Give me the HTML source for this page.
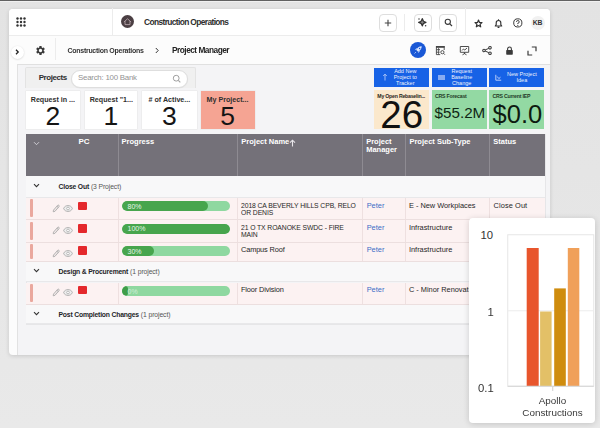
<!DOCTYPE html>
<html><head><meta charset="utf-8">
<style>
*{box-sizing:border-box;margin:0;padding:0}
html,body{width:600px;height:428px;overflow:hidden}
body{background:linear-gradient(#e3e3e3 0,#e5e5e5 40%,#e9e9e9 100%);font-family:"Liberation Sans",sans-serif;position:relative;color:#2a2a2a}
.a{position:absolute}
.t{position:absolute;white-space:nowrap;line-height:1}
#topstrip{left:0;top:0;width:600px;height:2.4px;background:linear-gradient(#5a5a5a 0,#6a6a6a 55%,#f0f0f0 60%,#f0f0f0 100%)}
#win{left:8.6px;top:8.6px;width:541.4px;height:346.6px;background:#fcfcfc;border-radius:4px;box-shadow:0 1px 4px rgba(0,0,0,.14)}
#hdr{left:8.6px;top:8.6px;width:541.4px;height:27.4px;border-bottom:1px solid #ececec;border-radius:4px 4px 0 0;background:#fff}
.vd{position:absolute;width:1px;background:#ececec}
.btn{position:absolute;width:18px;height:18px;border:1px solid #dedede;border-radius:4px;background:#fff}
#panel{left:17px;top:63.6px;width:533px;height:291.6px;background:#f4f4f6;border-left:1px solid #e2e2e2;border-top:1px solid #e0e0e0;border-bottom-right-radius:4px}
.card{position:absolute;background:#fff;top:90.7px;height:38px;width:54px;box-shadow:0 0 0 0.5px #e6e6e6}
.card .lb{position:absolute;top:5.3px;left:-10px;right:-10px;text-align:center;font-size:8px;font-weight:700;color:#2f2f2f;white-space:nowrap;line-height:1}
.card .num{position:absolute;top:12px;left:0;width:100%;text-align:center;font-size:26.5px;color:#151515;line-height:1}
.bb{position:absolute;top:67.5px;height:19px;background:#1762e6;color:#fff;font-size:5.5px;line-height:6.2px;text-align:center}
.rc{position:absolute;top:89.5px;height:39.5px}
.rc .lb{position:absolute;left:4px;top:4px;font-size:6px;font-weight:700;color:#222;white-space:nowrap}
#thead{left:26px;top:134px;width:519px;height:42px;background:#747179}
.th{position:absolute;top:0;height:42px;border-left:1px solid #8e8b92;color:#fff;font-weight:700;font-size:7.5px;padding:4px 0 0 3px;line-height:8px}
.grow{position:absolute;left:26px;width:519px;background:#f3f3f5;border-bottom:1px solid #e6e6e8}
.row{position:absolute;left:26px;width:519px;background:#fdf4f3;border-bottom:1px solid #ece2e1}
.cd{position:absolute;top:0;bottom:0;width:1px;background:#efe3e2}
.acc{position:absolute;left:4.3px;width:2.8px;background:#eaa89e;border-radius:1px}
.sq{position:absolute;left:52.3px;width:8.8px;height:8.8px;background:#e4282c;border-radius:1px}
.pb{position:absolute;left:95.5px;width:108.5px;height:10px;border-radius:5px;background:#8fd8a0;overflow:hidden}
.pf{position:absolute;left:0;top:0;height:10px;border-radius:5px;background:#47a54d}
.pt{position:absolute;left:6px;top:1.6px;font-size:7px;color:#e6f5e8;line-height:7px}
.cell{position:absolute;font-size:7.4px;color:#262626;line-height:7.2px;white-space:nowrap}
.blue{color:#3b6dc6}
#chart{left:469px;top:217.5px;width:126px;height:205.5px;background:#fff;border-radius:4px;box-shadow:0 1px 6px rgba(0,0,0,.16)}
</style></head><body><div id="root" style="position:absolute;left:0;top:0;width:600px;height:428px;overflow:hidden;filter:blur(0.3px)">
<div id="topstrip" class="a"></div>
<div id="win" class="a"></div>
<div id="hdr" class="a"></div>

<!-- header -->
<svg class="a" style="left:16.2px;top:17.3px" width="10" height="10" viewBox="0 0 10 10" fill="#333"><circle cx="1.5" cy="1.5" r="1.2"/><circle cx="5.0" cy="1.5" r="1.2"/><circle cx="8.5" cy="1.5" r="1.2"/><circle cx="1.5" cy="5.0" r="1.2"/><circle cx="5.0" cy="5.0" r="1.2"/><circle cx="8.5" cy="5.0" r="1.2"/><circle cx="1.5" cy="8.5" r="1.2"/><circle cx="5.0" cy="8.5" r="1.2"/><circle cx="8.5" cy="8.5" r="1.2"/></svg>
<div class="vd" style="left:112px;top:8px;height:28px"></div>
<svg class="a" style="left:121px;top:15px" width="13" height="13" viewBox="0 0 13 13">
<circle cx="6.5" cy="6.5" r="6.5" fill="#4b3f43"/>
<path d="M2.9 7 L6.5 3.8 L10.1 7 M4 6.1 V9.6 H9 V6.1" fill="none" stroke="#b9a8ad" stroke-width="0.85"/>
</svg>
<div class="t" style="left:144px;top:17.5px;font-size:8.4px;font-weight:700;color:#2e2e2e;letter-spacing:-0.62px">Construction Operations</div>
<div class="btn" style="left:379px;top:13.5px"></div>
<svg class="a" style="left:384px;top:18.5px" width="8" height="8" viewBox="0 0 8 8"><path d="M4 0.8V7.2M0.8 4H7.2" stroke="#444" stroke-width="1.1"/></svg>
<div class="vd" style="left:404px;top:14px;height:17px"></div>
<div class="btn" style="left:413.5px;top:13.5px"></div>
<svg class="a" style="left:417px;top:17px" width="11" height="11" viewBox="0 0 11 11"><path d="M5.3 1.6 Q5.8 4.8 9 5.3 Q5.8 5.8 5.3 9 Q4.8 5.8 1.6 5.3 Q4.8 4.8 5.3 1.6 Z" fill="#888" stroke="#333" stroke-width="1.2" stroke-linejoin="round"/><circle cx="2" cy="1.9" r="0.75" fill="#3a3a3a"/><circle cx="8.6" cy="8.7" r="0.75" fill="#3a3a3a"/></svg>
<div class="btn" style="left:439px;top:13.5px"></div>
<svg class="a" style="left:443.5px;top:18px" width="9" height="9" viewBox="0 0 9 9"><circle cx="3.8" cy="3.8" r="2.6" fill="none" stroke="#3a3a3a" stroke-width="1.1"/><path d="M5.8 5.8 L8 8" stroke="#3a3a3a" stroke-width="1.2"/></svg>
<div class="vd" style="left:465px;top:8px;height:28px"></div>
<svg class="a" style="left:474px;top:18.5px" width="9" height="9" viewBox="0 0 9 9"><path d="M4.5 1 L5.5 3.4 L8 3.6 L6.1 5.3 L6.7 7.8 L4.5 6.5 L2.3 7.8 L2.9 5.3 L1 3.6 L3.5 3.4 Z" fill="none" stroke="#333" stroke-width="1.2" stroke-linejoin="round"/></svg>
<svg class="a" style="left:493px;top:17.5px" width="11" height="11" viewBox="0 0 11 11"><path d="M2.3 8 H8.7 L7.8 6.7 V4.8 A2.3 2.3 0 0 0 3.2 4.8 V6.7 Z M4.6 9.4 H6.4" fill="none" stroke="#333" stroke-width="1.15" stroke-linejoin="round"/><path d="M5.5 1.3V2.4" stroke="#333" stroke-width="1.1"/></svg>
<svg class="a" style="left:513px;top:18px" width="10" height="10" viewBox="0 0 10 10"><circle cx="4.8" cy="4.9" r="4.1" fill="none" stroke="#3a3a3a" stroke-width="1"/><path d="M3.5 3.9 A1.35 1.35 0 1 1 4.8 5.2 V6" fill="none" stroke="#3a3a3a" stroke-width="0.95"/><circle cx="4.8" cy="7.4" r="0.55" fill="#3a3a3a"/></svg>
<div class="a" style="left:530.5px;top:15.5px;width:14.5px;height:14.5px;border-radius:7.25px;background:#f1f1f1"></div>
<div class="t" style="left:531px;top:19.8px;width:13px;text-align:center;font-size:6.8px;font-weight:700;color:#333;letter-spacing:-0.2px">KB</div>

<!-- breadcrumb -->
<div id="panel" class="a"></div>
<div class="a" style="left:10.5px;top:45.5px;width:13px;height:13px;border-radius:6.5px;background:#fff;box-shadow:0 0.5px 2px rgba(0,0,0,.16)"></div>
<svg class="a" style="left:14px;top:49px" width="6" height="6" viewBox="0 0 6 6"><path d="M2 0.8 L4.2 3 L2 5.2" fill="none" stroke="#222" stroke-width="1.3"/></svg>
<svg class="a" style="left:34.5px;top:45px" width="11" height="11" viewBox="0 0 24 24"><path fill="#3a3a3a" d="M19.14 12.94c.04-.3.06-.61.06-.94 0-.32-.02-.64-.07-.94l2.03-1.58a.49.49 0 0 0 .12-.61l-1.92-3.32a.488.488 0 0 0-.59-.22l-2.39.96c-.5-.38-1.03-.7-1.62-.94l-.36-2.54a.484.484 0 0 0-.48-.41h-3.84c-.24 0-.43.17-.47.41l-.36 2.54c-.59.24-1.13.57-1.62.94l-2.39-.96c-.22-.08-.47 0-.59.22L2.74 8.87c-.12.21-.08.47.12.61l2.03 1.58c-.05.3-.09.63-.09.94s.02.64.07.94l-2.03 1.58a.49.49 0 0 0-.12.61l1.92 3.32c.12.22.37.29.59.22l2.39-.96c.5.38 1.03.7 1.62.94l.36 2.54c.05.24.24.41.48.41h3.84c.24 0 .44-.17.47-.41l.36-2.54c.59-.24 1.13-.56 1.62-.94l2.39.96c.22.08.47 0 .59-.22l1.92-3.32c.12-.22.07-.47-.12-.61l-2.01-1.58zM12 15.6c-1.98 0-3.6-1.62-3.6-3.6s1.62-3.6 3.6-3.6 3.6 1.62 3.6 3.6-1.62 3.6-3.6 3.6z"/></svg>
<div class="vd" style="left:55px;top:38px;height:22px"></div>
<div class="t" style="left:67.5px;top:46.8px;font-size:7px;font-weight:700;color:#333;letter-spacing:-0.28px">Construction Operations</div>
<svg class="a" style="left:154px;top:47px" width="6" height="7" viewBox="0 0 6 7"><path d="M1.8 1 L4.2 3.5 L1.8 6" fill="none" stroke="#333" stroke-width="1"/></svg>
<div class="t" style="left:172px;top:46px;font-size:8.3px;font-weight:700;color:#222;letter-spacing:-0.5px">Project Manager</div>
<div class="a" style="left:409.5px;top:42px;width:16px;height:16px;border-radius:8px;background:#1a58d6"></div>
<svg class="a" style="left:412.5px;top:45px" width="10" height="10" viewBox="0 0 10 10"><path d="M8.7 1.3 C6.2 1.2 4.3 2.8 3.3 4.9 L5.1 6.7 C7.2 5.7 8.8 3.8 8.7 1.3 Z" fill="#dbe7ff"/><path d="M3.3 4.9 L1.9 4.7 L3.4 3.3 L4.6 3.4 Z M5.1 6.7 L5.3 8.1 L6.7 6.6 L6.6 5.4 Z" fill="#b9cffa"/><path d="M2.9 7.1 L1.5 8.5" stroke="#b9cffa" stroke-width="0.9"/><circle cx="6.6" cy="3.4" r="0.75" fill="#1a5ad8"/></svg>
<svg class="a" style="left:435px;top:45px" width="11" height="11" viewBox="0 0 11 11"><path d="M1 1 H9.6 V2.8 H1 Z" fill="#444"/><path d="M1.4 1 V9.6 H5.2 M9.2 1 V5 M1.4 4.7 H5 M1.4 7.2 H4.6" fill="none" stroke="#444" stroke-width="0.9"/><path d="M3.6 2.8 V9.6" stroke="#444" stroke-width="0.8"/><circle cx="7.4" cy="7.2" r="1.6" fill="none" stroke="#444" stroke-width="0.9"/><path d="M8.5 8.3 L9.9 9.7" stroke="#444" stroke-width="1"/></svg>
<svg class="a" style="left:458.5px;top:44.5px" width="11" height="11" viewBox="0 0 11 11"><path d="M1.3 1.5 H9.7 V7.3 H1.3 Z M5.5 7.3 V9 M3.5 9.8 L5.5 8.6 L7.5 9.8 M3 5.5 L4.5 4 L5.8 5 L8 3" fill="none" stroke="#3a3a3a" stroke-width="0.9"/></svg>
<svg class="a" style="left:482px;top:46px" width="10" height="9" viewBox="0 0 10 9"><circle cx="8" cy="1.8" r="1.3" fill="none" stroke="#3a3a3a" stroke-width="1.05"/><circle cx="2" cy="4.5" r="1.3" fill="none" stroke="#3a3a3a" stroke-width="1.05"/><circle cx="8" cy="7.2" r="1.3" fill="none" stroke="#3a3a3a" stroke-width="1.05"/><path d="M3.2 3.9 L6.8 2.4 M3.2 5.1 L6.8 6.6" stroke="#3a3a3a" stroke-width="1"/></svg>
<svg class="a" style="left:505px;top:46px" width="9" height="9" viewBox="0 0 9 9"><path d="M2.6 4 V2.9 A1.9 1.9 0 0 1 6.4 2.9 V4" fill="none" stroke="#3a3a3a" stroke-width="1.1"/><rect x="1.2" y="4" width="6.6" height="4.8" rx="0.7" fill="#3a3a3a"/></svg>
<svg class="a" style="left:527.3px;top:45.6px" width="10" height="10" viewBox="0 0 10 10"><path d="M4.8 1 H9 V5.2 M5.2 9 H1 V4.8" fill="none" stroke="#3a3a3a" stroke-width="1.2"/></svg>

<!-- projects bar -->
<div class="a" style="left:25px;top:67.3px;width:171px;height:20.7px;background:#f0f0f0;border:1px solid #e3e3e3;border-bottom:none;border-radius:2px 2px 0 0"></div>
<div class="t" style="left:38.7px;top:73.6px;font-size:8px;font-weight:700;color:#2e2e2e;letter-spacing:-0.45px">Projects</div>
<div class="a" style="left:71px;top:69.6px;width:116.5px;height:18.4px;border-radius:9.2px;background:#fff;border:1px solid #dedede;box-shadow:0 0.5px 1px rgba(0,0,0,.06)"></div>
<div class="t" style="left:78px;top:74.2px;font-size:7.9px;color:#939393;letter-spacing:-0.25px">Search: 100 Bank</div>
<svg class="a" style="left:172px;top:74px" width="10" height="10" viewBox="0 0 10 10"><circle cx="4.2" cy="4.2" r="2.9" fill="none" stroke="#a0a0a0" stroke-width="1"/><path d="M6.3 6.3 L8.3 8.3" stroke="#a0a0a0" stroke-width="1.1"/></svg>
<!-- cards -->
<div class="card" style="left:25.8px;width:54px;background:#fff"><div class="lb"><span style="display:inline-block;transform:scaleX(0.89)">Request in ...</span></div><div class="num">2</div></div>
<div class="card" style="left:84.6px;width:52.7px;background:#fff"><div class="lb"><span style="display:inline-block;transform:scaleX(0.89)">Request "1...</span></div><div class="num">1</div></div>
<div class="card" style="left:142px;width:54.7px;background:#fff"><div class="lb"><span style="display:inline-block;transform:scaleX(0.89)"># of Active...</span></div><div class="num">3</div></div>
<div class="card" style="left:200.5px;width:54px;background:#f5a493"><div class="lb"><span style="display:inline-block;transform:scaleX(0.89)">My Project...</span></div><div class="num">5</div></div>
<!-- blue buttons -->
<div class="bb" style="left:373.8px;width:55.2px"><div style="position:absolute;left:16.5px;top:0.5px;width:30px;opacity:.92">Add New<br>Project to<br>Tracker</div>
<svg class="a" style="left:8px;top:5.5px" width="6" height="8" viewBox="0 0 6 8"><path d="M3 7.5 V1.2 M1.2 3 L3 1.2 L4.8 3" fill="none" stroke="#c9d8fb" stroke-width="0.8"/></svg></div>
<div class="bb" style="left:431.5px;width:55px"><div style="position:absolute;left:13.2px;top:0.3px;width:34px;opacity:.92">Request<br>Baseline<br>Change</div>
<div class="a" style="left:6.5px;top:7.5px;width:6.5px;height:5px;background:#9cb8f2;opacity:.85"></div></div>
<div class="bb" style="left:489px;width:55px"><div style="position:absolute;left:16.9px;top:3.2px;width:32px;opacity:.92">New Project<br>Idea</div>
<svg class="a" style="left:6.3px;top:6.6px" width="7" height="7" viewBox="0 0 7 7"><path d="M0.8 0.8 V6.2 H6.2 M2.2 2.5 L3.8 4.6 L5.5 3.2" fill="none" stroke="#c9d8fb" stroke-width="0.9"/></svg></div>
<!-- right cards -->
<div class="rc" style="left:374.3px;width:54.5px;background:#fbe8cc"><div class="lb" style="left:3px;top:3.7px;font-size:5.2px;letter-spacing:-0.22px;color:#2a2520">My Open Rebaselin...</div>
<div class="t" style="left:6px;top:6px;font-size:38.5px;color:#111">26</div></div>
<div class="rc" style="left:431.8px;width:55px;background:#93d9a3"><div class="lb" style="left:3.2px;top:3.7px;font-size:5.2px;letter-spacing:-0.2px;color:#1f3a25">CRS Forecast</div>
<div class="t" style="left:2.8px;top:15.5px;font-size:15.2px;color:#0f2614;letter-spacing:0px">$55.2M</div></div>
<div class="rc" style="left:489.2px;width:54.8px;background:#93d9a3"><div class="lb" style="left:3.2px;top:3.7px;font-size:5.2px;letter-spacing:-0.2px;color:#1f3a25">CRS Current IEP</div>
<div class="t" style="left:3.4px;top:12px;font-size:25.5px;color:#0d1a10;letter-spacing:0px">$0.0</div></div>
<!-- table -->
<div class="a" style="left:25.5px;top:133.7px;width:520px;height:191px;border:1px solid #e6e6e8;border-top:none"></div>
<div id="thead" class="a">
<svg class="a" style="left:7px;top:6.5px" width="7" height="5" viewBox="0 0 7 5"><path d="M1 1.2 L3.5 3.7 L6 1.2" fill="none" stroke="#d8d6dc" stroke-width="0.9"/></svg>
<div class="t" style="left:52.5px;top:4px;font-size:8px;font-weight:700;color:#fff;letter-spacing:-0.1px">PC</div>
<div class="th" style="left:91.6px;width:119.70000000000002px">Progress</div>
<div class="th" style="left:211.3px;width:124.89999999999998px">Project Name<svg style="position:absolute;left:51px;top:4.8px" width="7" height="8" viewBox="0 0 7 8"><path d="M3.5 7.5 V1.2 M1 3.7 L3.5 1.2 L6 3.7" fill="none" stroke="#e8e6ea" stroke-width="1.1"/></svg></div>
<div class="th" style="left:336.2px;width:43.19999999999999px">Project<br>Manager</div>
<div class="th" style="left:379.4px;width:83.90000000000003px">Project Sub-Type</div>
<div class="th" style="left:463.3px;width:55.69999999999999px">Status</div>
</div>

<div class="grow" style="top:176.2px;height:21.5px;background:#f8f8f9;border-bottom:1px solid #e8e8ea">
<svg class="a" style="left:6.5px;top:7.2px" width="7" height="5" viewBox="0 0 7 5"><path d="M1 1.2 L3.5 3.7 L6 1.2" fill="none" stroke="#333" stroke-width="1.05"/></svg>
<div class="t" style="left:32.5px;top:8.2px;font-size:6.8px;color:#1e1e28"><b style="letter-spacing:-0.18px">Close Out</b> <span style="color:#555;letter-spacing:-0.1px">(3 Project)</span></div>
</div>
<div class="row" style="top:197.7px;height:22.5px;background:#fcf2f2;border-bottom:1px solid #ecdfdf"><div class="cd" style="left:91.6px;background:#eee0e0"></div><div class="cd" style="left:211.3px;background:#eee0e0"></div><div class="cd" style="left:336.2px;background:#eee0e0"></div><div class="cd" style="left:379.4px;background:#eee0e0"></div><div class="cd" style="left:463.3px;background:#eee0e0"></div>
<div class="acc" style="top:1.8px;bottom:2px"></div>
<svg class="a" style="left:25.5px;top:6.199999999999999px" width="8" height="9" viewBox="0 0 8 9"><path d="M1.2 7.8 L1.5 6.1 L5.6 1.4 A0.95 0.95 0 0 1 7 2.7 L2.9 7.4 Z M4.9 2.2 L6.3 3.5" fill="#f0e8e8" stroke="#a8a8a8" stroke-width="0.85" stroke-linejoin="round"/></svg>
<svg class="a" style="left:36.6px;top:7.1px" width="10" height="7" viewBox="0 0 10 7"><path d="M0.6 3.5 C2 -0.4 8 -0.4 9.4 3.5 C8 7.4 2 7.4 0.6 3.5 Z" fill="#ededed" stroke="#acacac" stroke-width="0.9"/><circle cx="5" cy="3.5" r="1.35" fill="#fff" stroke="#acacac" stroke-width="0.8"/></svg>
<div class="sq" style="top:3.9px"></div>
<div class="pb" style="top:3.7px"><div class="pf" style="width:80%"></div><div class="pt" style="">80%</div></div>
<div class="cell" style="left:215px;top:4px;transform-origin:0 0;transform:scaleX(0.92);letter-spacing:-0.1px">2018 CA BEVERLY HILLS CPB, RELO<br>OR DENIS</div>
<div class="cell blue" style="left:340.7px;top:4px">Peter</div>
<div class="cell" style="left:383px;top:4px;letter-spacing:-0.02px">E - New Workplaces</div>
<div class="cell" style="left:467.5px;top:4px;letter-spacing:0.1px">Close Out</div>
</div>
<div class="row" style="top:220.2px;height:22.5px;background:#fcf2f2;border-bottom:1px solid #ecdfdf"><div class="cd" style="left:91.6px;background:#eee0e0"></div><div class="cd" style="left:211.3px;background:#eee0e0"></div><div class="cd" style="left:336.2px;background:#eee0e0"></div><div class="cd" style="left:379.4px;background:#eee0e0"></div><div class="cd" style="left:463.3px;background:#eee0e0"></div>
<div class="acc" style="top:1.8px;bottom:2px"></div>
<svg class="a" style="left:25.5px;top:6.199999999999999px" width="8" height="9" viewBox="0 0 8 9"><path d="M1.2 7.8 L1.5 6.1 L5.6 1.4 A0.95 0.95 0 0 1 7 2.7 L2.9 7.4 Z M4.9 2.2 L6.3 3.5" fill="#f0e8e8" stroke="#a8a8a8" stroke-width="0.85" stroke-linejoin="round"/></svg>
<svg class="a" style="left:36.6px;top:7.1px" width="10" height="7" viewBox="0 0 10 7"><path d="M0.6 3.5 C2 -0.4 8 -0.4 9.4 3.5 C8 7.4 2 7.4 0.6 3.5 Z" fill="#ededed" stroke="#acacac" stroke-width="0.9"/><circle cx="5" cy="3.5" r="1.35" fill="#fff" stroke="#acacac" stroke-width="0.8"/></svg>
<div class="sq" style="top:3.9px"></div>
<div class="pb" style="top:3.4px"><div class="pf" style="width:100%"></div><div class="pt" style="">100%</div></div>
<div class="cell" style="left:215px;top:4px;transform-origin:0 0;transform:scaleX(0.92);letter-spacing:-0.1px">21 O TX ROANOKE SWDC - FIRE<br>MAIN</div>
<div class="cell blue" style="left:340.7px;top:4px">Peter</div>
<div class="cell" style="left:383px;top:4px;letter-spacing:-0.02px">Infrastructure</div>

</div>
<div class="row" style="top:242.7px;height:18.9px;background:#fcf2f2;border-bottom:1px solid #ecdfdf"><div class="cd" style="left:91.6px;background:#eee0e0"></div><div class="cd" style="left:211.3px;background:#eee0e0"></div><div class="cd" style="left:336.2px;background:#eee0e0"></div><div class="cd" style="left:379.4px;background:#eee0e0"></div><div class="cd" style="left:463.3px;background:#eee0e0"></div>
<div class="acc" style="top:1.8px;bottom:2px"></div>
<svg class="a" style="left:25.5px;top:6.0px" width="8" height="9" viewBox="0 0 8 9"><path d="M1.2 7.8 L1.5 6.1 L5.6 1.4 A0.95 0.95 0 0 1 7 2.7 L2.9 7.4 Z M4.9 2.2 L6.3 3.5" fill="#f0e8e8" stroke="#a8a8a8" stroke-width="0.85" stroke-linejoin="round"/></svg>
<svg class="a" style="left:36.6px;top:6.9px" width="10" height="7" viewBox="0 0 10 7"><path d="M0.6 3.5 C2 -0.4 8 -0.4 9.4 3.5 C8 7.4 2 7.4 0.6 3.5 Z" fill="#ededed" stroke="#acacac" stroke-width="0.9"/><circle cx="5" cy="3.5" r="1.35" fill="#fff" stroke="#acacac" stroke-width="0.8"/></svg>
<div class="sq" style="top:3.7px"></div>
<div class="pb" style="top:3.7px"><div class="pf" style="width:30%"></div><div class="pt" style="">30%</div></div>
<div class="cell" style="left:215px;top:3.8px;letter-spacing:-0.15px">Campus Roof</div>
<div class="cell blue" style="left:340.7px;top:3.8px">Peter</div>
<div class="cell" style="left:383px;top:3.8px;letter-spacing:-0.02px">Infrastructure</div>

</div>
<div class="grow" style="top:261.6px;height:20.9px;background:#f8f8f9;border-bottom:1px solid #e8e8ea">
<svg class="a" style="left:6.5px;top:6.9px" width="7" height="5" viewBox="0 0 7 5"><path d="M1 1.2 L3.5 3.7 L6 1.2" fill="none" stroke="#333" stroke-width="1.05"/></svg>
<div class="t" style="left:32.5px;top:7.9px;font-size:6.8px;color:#1e1e28"><b style="letter-spacing:-0.18px">Design &amp; Procurement</b> <span style="color:#555;letter-spacing:-0.1px">(1 project)</span></div>
</div>
<div class="row" style="top:282.5px;height:22.4px;background:#fcf2f2;border-bottom:1px solid #ecdfdf"><div class="cd" style="left:91.6px;background:#eee0e0"></div><div class="cd" style="left:211.3px;background:#eee0e0"></div><div class="cd" style="left:336.2px;background:#eee0e0"></div><div class="cd" style="left:379.4px;background:#eee0e0"></div><div class="cd" style="left:463.3px;background:#eee0e0"></div>
<div class="acc" style="top:1.8px;bottom:2px"></div>
<svg class="a" style="left:25.5px;top:5.5px" width="8" height="9" viewBox="0 0 8 9"><path d="M1.2 7.8 L1.5 6.1 L5.6 1.4 A0.95 0.95 0 0 1 7 2.7 L2.9 7.4 Z M4.9 2.2 L6.3 3.5" fill="#f0e8e8" stroke="#a8a8a8" stroke-width="0.85" stroke-linejoin="round"/></svg>
<svg class="a" style="left:36.6px;top:6.4px" width="10" height="7" viewBox="0 0 10 7"><path d="M0.6 3.5 C2 -0.4 8 -0.4 9.4 3.5 C8 7.4 2 7.4 0.6 3.5 Z" fill="#ededed" stroke="#acacac" stroke-width="0.9"/><circle cx="5" cy="3.5" r="1.35" fill="#fff" stroke="#acacac" stroke-width="0.8"/></svg>
<div class="sq" style="top:3.2px"></div>
<div class="pb" style="top:3.5px"><div class="pf" style="width:6px;background:#3f9d48"></div><div class="pt" style="color:#cfeed6">0%</div></div>
<div class="cell" style="left:215px;top:3.6px;letter-spacing:-0.15px">Floor Division</div>
<div class="cell blue" style="left:340.7px;top:3.6px">Peter</div>
<div class="cell" style="left:383px;top:3.6px;letter-spacing:-0.02px">C - Minor Renovati</div>

</div>
<div class="grow" style="top:304.9px;height:19.6px;background:#f8f8f9;border-bottom:1px solid #e8e8ea">
<svg class="a" style="left:6.5px;top:6.3px" width="7" height="5" viewBox="0 0 7 5"><path d="M1 1.2 L3.5 3.7 L6 1.2" fill="none" stroke="#333" stroke-width="1.05"/></svg>
<div class="t" style="left:32.5px;top:7.3px;font-size:6.8px;color:#1e1e28"><b style="letter-spacing:-0.18px">Post Completion Changes</b> <span style="color:#555;letter-spacing:-0.1px">(1 project)</span></div>
</div>
<!-- chart popup -->
<div id="chart" class="a"></div>
<svg class="a" style="left:469px;top:217px" width="127" height="207" viewBox="469 217 127 207">
<rect x="507.75" y="234.75" width="86" height="151.5" fill="none" stroke="#e6e6e6" stroke-width="1"/>
<path d="M507.75 310.75 H593.75" stroke="#ececec" stroke-width="1"/>
<rect x="526.7" y="248" width="12" height="138" fill="#e8552c"/>
<rect x="540.1" y="311.5" width="11.5" height="74.5" fill="#e3c067"/>
<rect x="554.2" y="288.4" width="11.6" height="97.6" fill="#cf8c0e"/>
<rect x="567.8" y="248" width="11.5" height="138" fill="#f0a05a"/>
<path d="M507.75 386.25 H593.75" stroke="#d4d4d4" stroke-width="1"/>
<path d="M552.75 386.5 V391" stroke="#cfcfcf" stroke-width="1"/>
</svg>
<div class="t" style="left:480.5px;top:230px;font-size:11.3px;color:#333">10</div>
<div class="t" style="left:487.6px;top:306.5px;font-size:11.3px;color:#383838">1</div>
<div class="t" style="left:478px;top:382.5px;font-size:11.3px;color:#333">0.1</div>
<div class="t" style="left:511.5px;top:394.6px;width:82px;text-align:center;font-size:9.9px;line-height:12.7px;color:#383838;white-space:normal">Apollo<br>Constructions</div>
</div></body></html>
